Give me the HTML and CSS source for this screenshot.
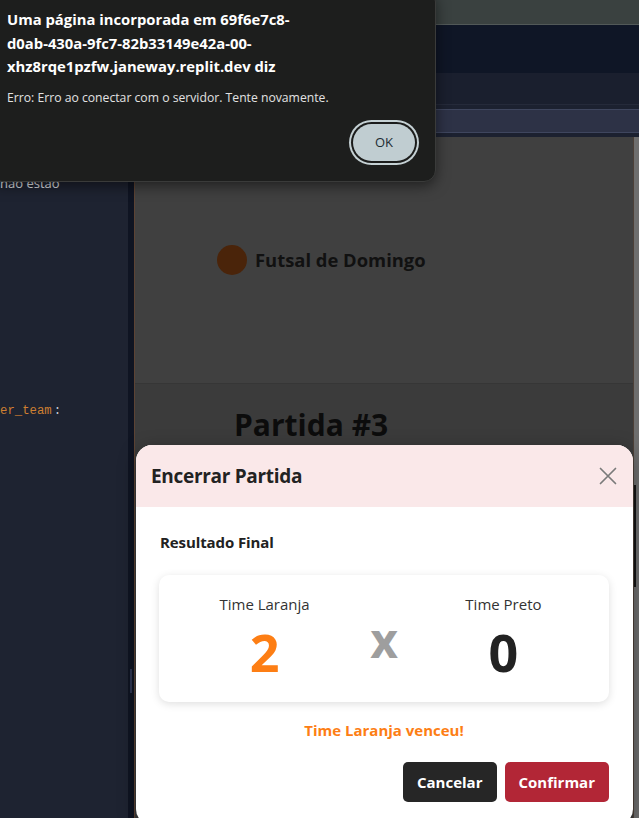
FILE: index.html
```html
<!DOCTYPE html>
<html lang="pt-BR">
<head>
<meta charset="utf-8">
<title>Encerrar Partida</title>
<link rel="stylesheet" href="styles.css">
</head>
<body>
<div class="app">
  <aside class="side">
    <div class="side-content">
      <p class="side-text">não estão</p>
      <p class="code"><span class="code-key">er_team</span><span class="code-punct">:</span></p>
    </div>
    <div class="side-gutter"><div class="side-thumb"></div></div>
  </aside>
  <div class="divider"></div>
  <main class="main">
    <div class="bar bar-top"></div>
    <div class="bar bar-nav"></div>
    <div class="bar bar-sub"></div>
    <div class="bar bar-tabs"><div class="tab-strip"></div></div>
    <div class="preview">
      <div class="page">
        <header class="page-header">
          <div class="brand">
            <span class="brand-dot"></span>
            <span class="brand-name">Futsal de Domingo</span>
          </div>
        </header>
        <section class="page-body">
          <h1 class="page-title">Partida #3</h1>
        </section>
      </div>
      <div class="scrollbar"><div class="scroll-thumb"></div></div>

      <div class="modal">
        <div class="modal-header">
          <h2 class="modal-title">Encerrar Partida</h2>
          <svg class="modal-close" width="18" height="18" viewBox="0 0 18 18" aria-hidden="true">
            <path d="M1.5 1.5 L16.5 16.5 M16.5 1.5 L1.5 16.5" stroke="#7a7a7a" stroke-width="1.7" fill="none" stroke-linecap="round"/>
          </svg>
        </div>
        <div class="modal-body">
          <h3 class="section-title">Resultado Final</h3>
          <div class="score-card">
            <div class="team">
              <div class="team-name">Time Laranja</div>
              <div class="team-score score-orange">2</div>
            </div>
            <div class="versus">x</div>
            <div class="team">
              <div class="team-name">Time Preto</div>
              <div class="team-score score-black">0</div>
            </div>
          </div>
          <p class="winner">Time Laranja venceu!</p>
          <div class="modal-actions">
            <button class="btn btn-dark">Cancelar</button>
            <button class="btn btn-danger">Confirmar</button>
          </div>
        </div>
      </div>
    </div>
  </main>
</div>

<div class="alert">
  <p class="alert-title">Uma página incorporada em 69f6e7c8-<br>d0ab-430a-9fc7-82b33149e42a-00-<br>xhz8rqe1pzfw.janeway.replit.dev diz</p>
  <p class="alert-msg">Erro: Erro ao conectar com o servidor. Tente novamente.</p>
  <div class="alert-actions"><button class="alert-ok">OK</button></div>
</div>
</body>
</html>
```

FILE: styles.css
```css
* { box-sizing: border-box; }

html, body {
  margin: 0;
  padding: 0;
  width: 639px;
  height: 818px;
  overflow: hidden;
  background: #1e2331;
  font-family: "Open Sans", "Noto Sans", sans-serif;
}

.app {
  display: flex;
  width: 639px;
  height: 818px;
}

/* ---------- left editor panel ---------- */
.side {
  display: flex;
  width: 134px;
  flex: none;
}
.side-content {
  width: 128px;
  background: #1e2331;
  overflow: hidden;
}
.side-text {
  margin: 175px 0 0 0;
  font-size: 13px;
  line-height: 16px;
  color: #e4e6ea;
  white-space: nowrap;
}
.code {
  margin: 212px 0 0 0;
  font-family: "Liberation Mono", "DejaVu Sans Mono", monospace;
  font-size: 12.3px;
  line-height: 16px;
  white-space: nowrap;
}
.code-key { color: #cf7f31; }
.code-punct { color: #c9ccd4; margin-left: 2px; }

.side-gutter {
  width: 6px;
  background: #0f1422;
}
.side-thumb {
  width: 2px;
  height: 24px;
  margin: 669px 0 0 2px;
  background: #2e3550;
}
.divider {
  width: 1px;
  flex: none;
  background: #5c4334;
}

/* ---------- main ---------- */
.main {
  flex: 1;
  display: flex;
  flex-direction: column;
  min-width: 0;
}
.bar { flex: none; }
.bar-top {
  height: 25px;
  background: #3a4140;
  border-bottom: 1px solid #525958;
}
.bar-nav {
  height: 48px;
  background: #0f1626;
}
.bar-sub {
  height: 31px;
  background: #1a1f2e;
}
.bar-tabs {
  height: 33px;
  background: #1c2130;
  border-top: 1px solid #252a3a;
  padding: 4px 0;
}
.tab-strip {
  height: 24px;
  background: #2d3246;
  border-top: 1px solid #3f465e;
  border-bottom: 1px solid #3f465e;
}

.preview {
  position: relative;
  flex: 1;
  display: flex;
}
.page {
  flex: 1;
  display: flex;
  flex-direction: column;
  background: #3b3b3b;
}
.page-header {
  height: 247px;
  background: #404040;
  border-bottom: 1px solid #363636;
  display: flex;
  align-items: center;
  padding-left: 82px;
}
.brand {
  display: flex;
  align-items: center;
  gap: 8px;
  margin-top: -1px;
}
.brand-dot {
  width: 30px;
  height: 30px;
  border-radius: 50%;
  background: #4a240a;
}
.brand-name {
  font-size: 18.4px;
  font-weight: 700;
  color: #111111;
}
.page-title {
  margin: 0;
  font-size: 30px;
  line-height: 37px;
  font-weight: 700;
  color: #0c0c0c;
}
.page-body {
  padding: 22px 0 0 99px;
}

.scrollbar {
  width: 6px;
  flex: none;
  background: #6e6e6e;
  border-left: 1px solid #4d4038;
  display: flex;
  flex-direction: column;
}
.scroll-thumb {
  width: 2px;
  height: 102px;
  margin-top: 348px;
  background: #151515;
}

/* ---------- modal ---------- */
.modal {
  position: absolute;
  left: 1px;
  top: 308px;
  width: 497px;
  height: 380px;
  background: #ffffff;
  border-radius: 16px;
  overflow: hidden;
  box-shadow: 0 4px 18px rgba(0, 0, 0, 0.35);
}
.modal-header {
  height: 62px;
  background: #fae8e9;
  display: flex;
  align-items: center;
  justify-content: space-between;
  padding: 0 16px 0 15px;
}
.modal-title {
  margin: 0;
  font-size: 19px;
  font-weight: 700;
  color: #222222;
  letter-spacing: -0.3px;
}
.modal-close { display: block; }

.modal-body {
  padding: 25px 24px 0 23px;
}
.section-title {
  margin: 0 0 0 1px;
  font-size: 15px;
  line-height: 20px;
  font-weight: 700;
  color: #212121;
  letter-spacing: -0.1px;
}
.score-card {
  margin-top: 23px;
  height: 127px;
  background: #ffffff;
  border-radius: 10px;
  box-shadow: 0 2px 8px rgba(0, 0, 0, 0.13);
  display: grid;
  grid-template-columns: 1fr auto 1fr;
  align-items: center;
  padding: 19px 0 20px;
}
.team {
  text-align: center;
}
.team-name {
  font-size: 15px;
  line-height: 20px;
  color: #333333;
}
.team-score {
  margin-top: 8px;
  font-size: 52px;
  line-height: 60px;
  font-weight: 700;
}
.score-orange { color: #fd7e14; }
.score-black { color: #222222; }
.versus {
  font-size: 48px;
  line-height: 48px;
  font-weight: 700;
  color: #9e9e9e;
  margin-top: 4px;
}
.winner {
  margin: 18px 0 0;
  text-align: center;
  font-size: 15px;
  line-height: 20px;
  font-weight: 700;
  color: #fd7e14;
}
.modal-actions {
  margin-top: 22px;
  display: flex;
  justify-content: flex-end;
  gap: 8px;
}
.btn {
  height: 40px;
  padding: 0 14px;
  border: none;
  border-radius: 5px;
  font-family: inherit;
  font-size: 15px;
  font-weight: 700;
  color: #ffffff;
}
.btn-dark { background: #262626; }
.btn-danger { background: #b22636; }

/* ---------- browser alert ---------- */
.alert {
  position: absolute;
  left: -10px;
  top: -10px;
  width: 446px;
  height: 192px;
  background: #1d1e1d;
  border: 1px solid #3a3b3a;
  border-radius: 12px;
  box-shadow: 0 4px 14px rgba(0, 0, 0, 0.5);
  padding: 17px 20px 0 16px;
}
.alert-title {
  margin: 0;
  font-size: 14.8px;
  line-height: 23.5px;
  font-weight: 700;
  color: #ffffff;
}
.alert-msg {
  margin: 11px 0 0;
  font-size: 12.2px;
  line-height: 16px;
  color: #e2e2e2;
}
.alert-actions {
  margin-top: 18px;
  display: flex;
  justify-content: flex-end;
}
.alert-ok {
  width: 62px;
  height: 37px;
  border: none;
  border-radius: 999px;
  background: #c0cdd1;
  box-shadow: 0 0 0 2px #1b1c1b, 0 0 0 4px #c5d1d4;
  font-family: inherit;
  font-size: 13px;
  color: #1c2c33;
  padding: 0;
}
```
